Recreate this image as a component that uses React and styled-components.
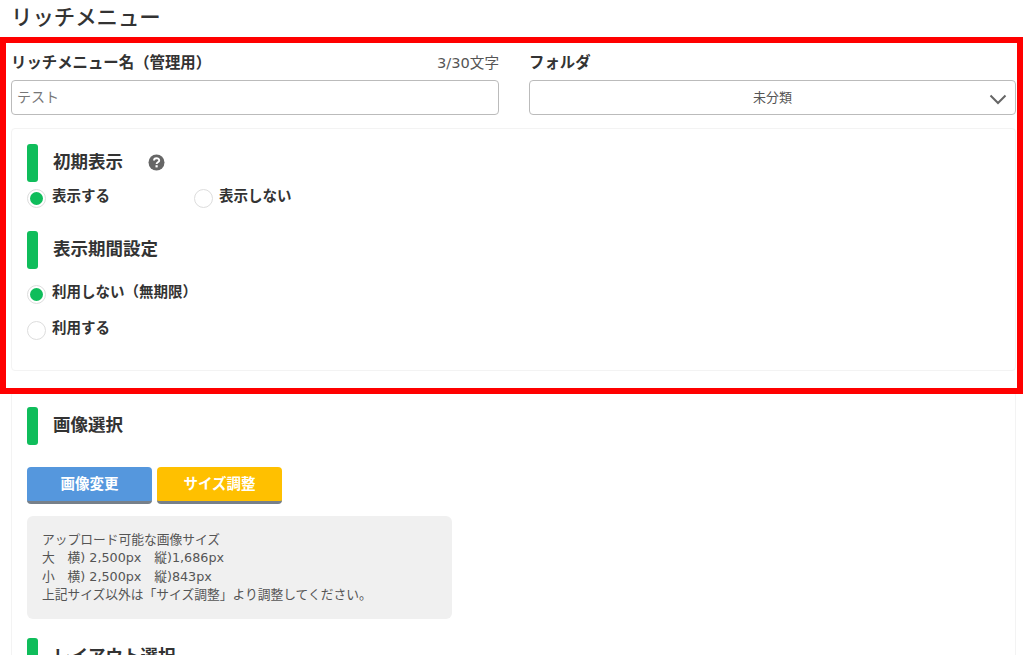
import React from 'react';
import styled, { createGlobalStyle } from 'styled-components';

const GlobalStyle = createGlobalStyle`
  html, body {
    margin: 0;
    padding: 0;
    background: #fff;
    height: 655px;
    overflow: hidden;
  }
  body {
    font-family: "Noto Sans CJK JP", "Noto Sans", sans-serif;
    color: #333;
  }
`;

const Page = styled.div`
  position: relative;
  width: 1024px;
  height: 655px;
  overflow: hidden;
  padding: 0 8px 0 11px;
  box-sizing: border-box;
`;

const PageTitle = styled.h1`
  margin: 0;
  height: 37px;
  padding-left: 0;
  font-size: 21.4px;
  line-height: 32px;
  font-weight: 500;
  color: #333;
`;

const FieldRow = styled.div`
  display: grid;
  grid-template-columns: 488px 487px;
  column-gap: 30px;
  padding-top: 13px;
`;

const Field = styled.div`
  display: flex;
  flex-direction: column;
`;

const FieldHead = styled.div`
  display: flex;
  justify-content: space-between;
  align-items: center;
  height: 22px;
  margin-bottom: 8px;
`;

const FieldLabel = styled.label`
  font-size: 15.4px;
  font-weight: 700;
  color: #333;
`;

const Counter = styled.span`
  font-family: "DejaVu Sans", "Noto Sans CJK JP", sans-serif;
  font-size: 14.6px;
  color: #555;
`;

const TextInput = styled.input`
  height: 35px;
  box-sizing: border-box;
  border: 1px solid #bbb;
  border-radius: 4px;
  padding: 0 5px 3px;
  font-family: inherit;
  font-size: 14px;
  color: #777;
  outline: none;
`;

const SelectBox = styled.div`
  position: relative;
  height: 35px;
  box-sizing: border-box;
  border: 1px solid #bbb;
  border-radius: 4px;
  padding-bottom: 3px;
  display: flex;
  align-items: center;
  justify-content: center;
  font-size: 13px;
  color: #555;
`;

const Chevron = styled.svg`
  position: absolute;
  right: 8px;
  top: 13px;
  width: 18px;
  height: 11px;
`;

const Card = styled.section`
  margin-top: ${(props) => props.$top}px;
  box-sizing: border-box;
  min-height: ${(props) => props.$height || 0}px;
  border: 1px solid #f3f3f3;
  border-radius: 4px;
  padding: 15px 15px 0;
`;

const SectionHead = styled.div`
  display: flex;
  align-items: center;
  height: 38px;
  gap: 15px;
  margin-top: ${(props) => props.$top || 0}px;
  margin-bottom: ${(props) => props.$gap || 0}px;
`;

const GreenBar = styled.span`
  width: 11px;
  height: 38px;
  border-radius: 3px;
  background: #0fbd5b;
`;

const SectionTitle = styled.h2`
  margin: 0;
  padding-bottom: 5px;
  font-size: 17.5px;
  font-weight: 700;
  color: #333;
`;

const HelpIcon = styled.svg`
  width: 17px;
  height: 17px;
  margin-left: 10px;
  margin-bottom: 2px;
`;

const RadioRow = styled.div`
  display: flex;
  align-items: flex-start;
  height: ${(props) => props.$height}px;
  margin-top: ${(props) => props.$top || 0}px;
`;

const RadioItem = styled.label`
  display: flex;
  align-items: center;
  gap: 6px;
  width: ${(props) => props.$width || 'auto'};
  font-size: 14.5px;
  font-weight: 700;
  line-height: 19px;
  color: #333;
`;

const RadioMark = styled.span`
  width: 19px;
  height: 19px;
  box-sizing: border-box;
  border: 1px solid #ddd;
  border-radius: 50%;
  background: #fff;
  display: flex;
  align-items: center;
  justify-content: center;
  position: relative;
  top: 1px;
  &::after {
    content: '';
    display: ${(props) => (props.$on ? 'block' : 'none')};
    width: 13px;
    height: 13px;
    border-radius: 50%;
    background: #0fbd5b;
  }
`;

const RadioText = styled.span`
  position: relative;
  top: -3px;
`;

const ButtonRow = styled.div`
  display: flex;
  gap: 5px;
`;

const ActionButton = styled.button`
  width: 125px;
  height: 37px;
  border: 0;
  border-bottom: 3px solid #77808a;
  border-radius: 4px;
  background: ${(props) => props.$color};
  color: #fff;
  font-family: inherit;
  font-size: 14.5px;
  font-weight: 700;
  padding: 0 0 3px;
`;

const InfoBox = styled.div`
  width: 425px;
  height: 103px;
  box-sizing: border-box;
  margin-top: 12px;
  padding: 15px 15px;
  border-radius: 6px;
  background: #f0f0f0;
  font-family: "DejaVu Sans", "Noto Sans CJK JP", sans-serif;
  font-size: 12.75px;
  line-height: 18.3px;
  color: #555;
`;

const OverlayFrame = styled.div`
  position: absolute;
  left: 0;
  top: 37px;
  width: 1023px;
  height: 357px;
  box-sizing: border-box;
  border: 6px solid #ff0000;
  pointer-events: none;
`;

function Radio({ on, width, children }) {
  return (
    <RadioItem $width={width}>
      <RadioMark $on={on} />
      <RadioText>{children}</RadioText>
    </RadioItem>
  );
}

export default function App() {
  return (
    <Page>
      <GlobalStyle />
      <PageTitle>リッチメニュー</PageTitle>
      <FieldRow>
        <Field>
          <FieldHead>
            <FieldLabel>リッチメニュー名（管理用）</FieldLabel>
            <Counter>3/30文字</Counter>
          </FieldHead>
          <TextInput defaultValue="テスト" />
        </Field>
        <Field>
          <FieldHead>
            <FieldLabel>フォルダ</FieldLabel>
          </FieldHead>
          <SelectBox>
            未分類
            <Chevron viewBox="0 0 18 11" fill="none" stroke="#666" strokeWidth="2">
              <path d="M1.5 1.5 L9 9 L16.5 1.5" />
            </Chevron>
          </SelectBox>
        </Field>
      </FieldRow>

      <Card $top={13} $height={243}>
        <SectionHead>
          <GreenBar />
          <SectionTitle>初期表示</SectionTitle>
          <HelpIcon viewBox="0 0 17 17">
            <circle cx="8.5" cy="8.5" r="8" fill="#666" />
            <path d="M6 6.6 C6 3.5 11.2 3.5 11.2 6.4 C11.2 8.3 8.6 8.2 8.6 10" fill="none" stroke="#fff" strokeWidth="1.9" />
            <rect x="7.5" y="11.2" width="2.2" height="2.2" fill="#fff" />
          </HelpIcon>
        </SectionHead>
        <RadioRow $top={6} $height={43}>
          <Radio on width="167px">表示する</Radio>
          <Radio>表示しない</Radio>
        </RadioRow>
        <SectionHead $gap={15}>
          <GreenBar />
          <SectionTitle>表示期間設定</SectionTitle>
        </SectionHead>
        <RadioRow $height={36}>
          <Radio on>利用しない（無期限）</Radio>
        </RadioRow>
        <RadioRow $height={36}>
          <Radio>利用する</Radio>
        </RadioRow>
      </Card>

      <Card $top={20} $height={300}>
        <SectionHead $gap={22}>
          <GreenBar />
          <SectionTitle>画像選択</SectionTitle>
        </SectionHead>
        <ButtonRow>
          <ActionButton $color="#5597dd">画像変更</ActionButton>
          <ActionButton $color="#ffc000">サイズ調整</ActionButton>
        </ButtonRow>
        <InfoBox>
          アップロード可能な画像サイズ<br />
          大　横) 2,500px　縦)1,686px<br />
          小　横) 2,500px　縦)843px<br />
          上記サイズ以外は「サイズ調整」より調整してください。
        </InfoBox>
        <SectionHead $top={19}>
          <GreenBar />
          <SectionTitle>レイアウト選択</SectionTitle>
        </SectionHead>
      </Card>

      <OverlayFrame />
    </Page>
  );
}
